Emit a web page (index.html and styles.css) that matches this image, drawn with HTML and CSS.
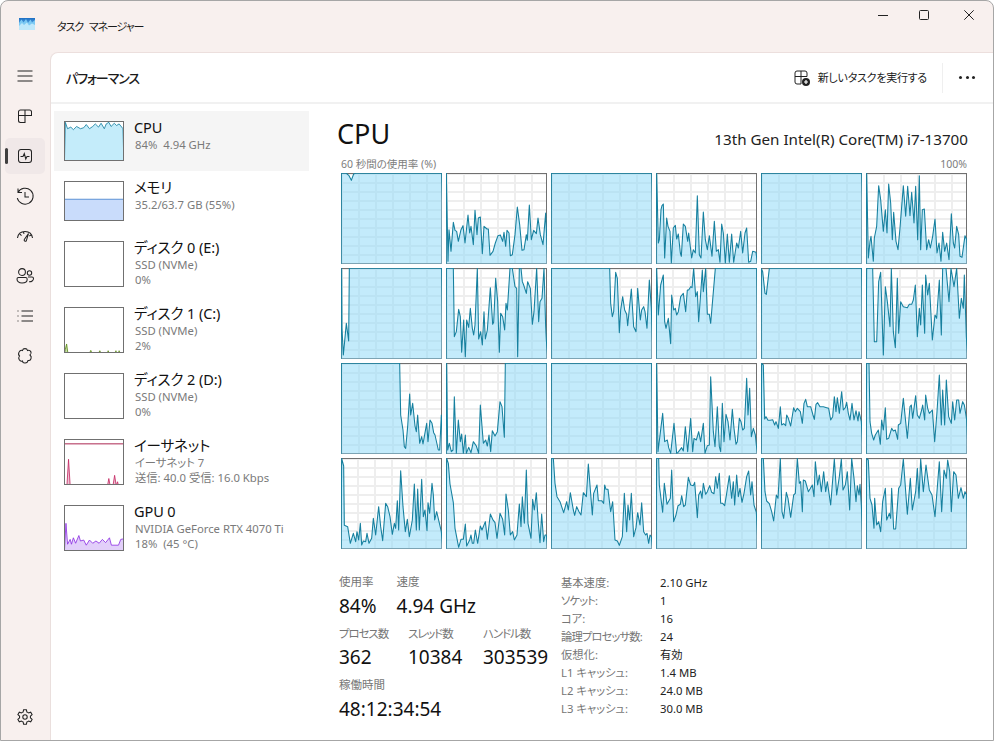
FILE: index.html
```html
<!DOCTYPE html>
<html lang="ja">
<head>
<meta charset="utf-8">
<title>タスク マネージャー</title>
<link rel="stylesheet" href="styles.css">
</head>
<body>
<div class="window">
  <header class="titlebar">
    <div class="brand">
      <svg class="app-icon" viewBox="0 0 16 12"><defs><linearGradient id="appg" x1="0" y1="0" x2="0" y2="1"><stop offset="0" stop-color="#1e6fc4"/><stop offset="1" stop-color="#8fd6f7"/></linearGradient></defs><rect width="16" height="12" fill="url(#appg)"/><path d="M0 5 L2.5 1.5 L4.5 4.5 L7 1 L9 5 L11.5 1.5 L13 4.5 L16 2 V12 H0Z" fill="#7cc9f3"/><path d="M0 8 L3 5 L5 7 L8 4.5 L10 7.5 L13 5.5 L16 7 V12 H0Z" fill="#bfe8fb"/></svg>
      <span class="app-title">タスク マネージャー</span>
    </div>
    <div class="controls">
      <svg class="ctl ctl-min" viewBox="0 0 10 10"><path d="M0 5.5H10"/></svg>
      <svg class="ctl ctl-max" viewBox="0 0 10 10"><rect x=".5" y=".5" width="9" height="9" rx="1"/></svg>
      <svg class="ctl ctl-close" viewBox="0 0 10 10"><path d="M.3 .3L9.7 9.7M9.7 .3L.3 9.7"/></svg>
    </div>
  </header>
  <div class="body">
    <nav class="nav">
      <div class="nav-top">
        <div class="nav-item"><svg class="ico" viewBox="0 0 20 20"><path d="M2.5 5H17.5M2.5 10H17.5M2.5 15H17.5"/></svg></div>
        <div class="nav-item"><svg class="ico" viewBox="0 0 20 20"><path d="M3.5 9.5H16.5V6a2 2 0 0 0-2-2H5.5a2 2 0 0 0-2 2V14.5a2 2 0 0 0 2 2H10V4"/></svg></div>
        <div class="nav-item active"><span class="indicator"></span><svg class="ico" viewBox="0 0 20 20"><rect x="3.5" y="3.5" width="13" height="13" rx="2.5"/><path d="M5.5 10.5H8L9.3 7.5L10.8 13L12 10.5H14.5"/></svg></div>
        <div class="nav-item"><svg class="ico" viewBox="0 0 20 20"><path d="M3 6.5A8 8 0 1 1 2.3 12M3 2.5V6.500H7M10 6V11H14"/></svg></div>
        <div class="nav-item"><svg class="ico" viewBox="0 0 20 20"><path d="M2.500 12C3 8 6 5.500 10 5.500S17 8 17.500 12M5 8.200l1.500 1.500M8.500 6l.5 1.800M16 9l-1.700 1M13.500 7.500L9.300 13.500a1.200 1.200 0 0 0 2 1.300Z"/></svg></div>
        <div class="nav-item"><svg class="ico" viewBox="0 0 20 20"><circle cx="7" cy="6" r="3.4"/><circle cx="14.5" cy="7" r="2.2"/><path d="M3.5 11.5H10.500a1.700 1.700 0 0 1 1.700 1.700C12.200 15.500 10 17 7 17S2 15.500 2 13a1.500 1.500 0 0 1 1.500-1.500ZM13 11H17a1.500 1.500 0 0 1 1.500 1.500C18.500 14.500 16.500 16 14 15.700"/></svg></div>
        <div class="nav-item"><svg class="ico" viewBox="0 0 20 20"><path d="M6.500 5H18M6.500 10H18M6.500 15H18M2.500 5H3.500M2.500 10H3.500M2.500 15H3.500"/></svg></div>
        <div class="nav-item"><svg class="ico" viewBox="0 0 20 20"><path d="M7.500 4.500C8 2 12 2 12.500 4.500C15.500 3.500 17.500 7 15 9C17.500 11 15.800 15 13 14.500C12.500 17.800 7.700 17.800 7.500 15C4.800 16 2.500 12.500 4.500 10C2.300 8 4.500 3.500 7.500 4.500Z"/></svg></div>
      </div>
      <div class="nav-item"><svg class="ico" viewBox="0 0 20 20"><circle cx="10" cy="10" r="2.200"/><path d="M8.600 2.800H11.400L11.900 5A5.500 5.500 0 0 1 13.500 5.900L15.700 5.200L17.100 7.600L15.400 9.100A5.500 5.500 0 0 1 15.400 10.900L17.100 12.400L15.700 14.800L13.500 14.100A5.500 5.500 0 0 1 11.900 15L11.400 17.200H8.600L8.100 15A5.500 5.500 0 0 1 6.500 14.100L4.300 14.800L2.900 12.400L4.600 10.900A5.500 5.500 0 0 1 4.600 9.100L2.900 7.600L4.300 5.200L6.500 5.900A5.500 5.500 0 0 1 8.100 5Z"/></svg></div>
    </nav>
    <main class="panel">
      <div class="toolbar">
        <h1 class="page-title">パフォーマンス</h1>
        <div class="tools">
          <div class="run-task">
            <svg class="run-icon" viewBox="0 0 16 16"><path class="run-lines" d="M1 6.500H13V3a2 2 0 0 0-2-2H3a2 2 0 0 0-2 2V12a2 2 0 0 0 2 2H7M7 1V14"/><circle cx="12" cy="12" r="4" class="run-dot"/><path class="run-plus" d="M12 10V14M10 12H14"/></svg>
            <span>新しいタスクを実行する</span>
          </div>
          <span class="more"><i></i><i></i><i></i></span>
        </div>
      </div>
      <div class="content">
        <aside class="list">
          <div class="row short selected">
            <svg class="thumb" viewBox="192 364 180 119" preserveAspectRatio="none"><polygon class="p-cpu" points="190,500 193,365 200,385 210,380 218,388 228,378 240,385 250,382 258,372 268,385 278,378 286,370 296,380 304,368 314,385 320,370 328,365 335,378 345,368 352,375 360,370 372,385 375,500"/></svg>
            <div class="row-text"><div class="name">CPU</div><div class="sub">84%&nbsp; 4.94 GHz</div></div>
          </div>
          <div class="row short">
            <svg class="thumb" viewBox="192 544 180 119" preserveAspectRatio="none"><polygon class="p-mem" points="190,598 375,598 375,670 190,670"/></svg>
            <div class="row-text"><div class="name">メモリ</div><div class="sub">35.2/63.7 GB (55%)</div></div>
          </div>
          <div class="row">
            <svg class="thumb" viewBox="0 0 180 137"></svg>
            <div class="row-text"><div class="name">ディスク 0 (E:)</div><div class="sub">SSD (NVMe)</div><div class="sub">0%</div></div>
          </div>
          <div class="row">
            <svg class="thumb" viewBox="192 171 180 137" preserveAspectRatio="none"><polygon class="p-disk" points="190,312 193,300 197,283 201,312 268,312 272,303 276,312 296,312 300,304 304,312 323,312 326,304 329,312 348,312 350,304 352,312 358,312 360,304 362,312 375,312"/></svg>
            <div class="row-text"><div class="name">ディスク 1 (C:)</div><div class="sub">SSD (NVMe)</div><div class="sub">2%</div></div>
          </div>
          <div class="row">
            <svg class="thumb" viewBox="0 0 180 137"></svg>
            <div class="row-text"><div class="name">ディスク 2 (D:)</div><div class="sub">SSD (NVMe)</div><div class="sub">0%</div></div>
          </div>
          <div class="row">
            <svg class="thumb" viewBox="192 568 180 137" preserveAspectRatio="none"><path class="p-net-limit" d="M190 580H375"/><polygon class="p-net" points="190,710 198,710 203,628 208,710 324,710 328,688 332,710 341,710 346,678 351,710 355,698 358,710 375,710"/></svg>
            <div class="row-text"><div class="name">イーサネット</div><div class="sub">イーサネット 7</div><div class="sub">送信: 40.0 受信: 16.0 Kbps</div></div>
          </div>
          <div class="row">
            <svg class="thumb" viewBox="192 766 180 137" preserveAspectRatio="none"><polygon class="p-gpu" points="190,910 195,820 200,885 208,870 212,885 218,865 225,882 235,858 240,875 250,872 258,888 268,872 278,882 288,875 298,882 308,870 318,880 330,865 336,888 358,888 365,870 375,868 375,910"/></svg>
            <div class="row-text"><div class="name">GPU 0</div><div class="sub">NVIDIA GeForce RTX 4070 Ti</div><div class="sub">18%&nbsp; (45 °C)</div></div>
          </div>
        </aside>
        <section class="detail">
          <div class="detail-head"><h2 class="cpu-title">CPU</h2><div class="cpu-model">13th Gen Intel(R) Core(TM) i7-13700</div></div>
          <div class="axis"><span>60 秒間の使用率 (%)</span><span>100%</span></div>
          <div class="charts">
            <div class="chart"><svg viewBox="34 190 303 273" preserveAspectRatio="none"><polygon points="34,480 35,191 50,191 58,198 65,212 72,193 78,191 336,191 345,480"/></svg></div>
            <div class="chart"><svg viewBox="349 190 303 273" preserveAspectRatio="none"><polygon points="349,480 350,190 355,455 358,360 364,425 371,338 376,362 381,365 386,395 394,360 400,348 406,400 415,316 420,370 424,350 431,405 436,302 442,375 446,325 452,322 458,432 463,350 472,358 476,358 481,437 490,425 497,400 505,378 512,376 519,395 523,368 528,410 532,362 538,370 542,438 548,435 556,375 563,292 570,345 577,422 583,420 590,375 593,392 599,286 605,390 612,362 620,372 625,325 632,375 640,405 648,310 655,480"/></svg></div>
            <div class="chart"><svg viewBox="664 190 303 273" preserveAspectRatio="none"><polygon points="664,480 665,191 966,191 975,480"/></svg></div>
            <div class="chart"><svg viewBox="18 190 303 273" preserveAspectRatio="none"><polygon points="18,480 20,190 25,400 28,390 33,300 36,288 40,283 44,445 50,325 54,350 60,365 64,460 70,355 76,347 80,388 85,373 91,430 94,440 100,343 106,350 113,395 116,370 125,445 130,420 136,430 142,258 148,435 153,445 160,307 166,390 172,420 178,378 186,440 193,335 199,425 205,420 210,458 215,343 220,370 226,460 232,373 238,458 245,373 251,458 260,400 265,415 272,365 278,430 285,370 290,355 296,458 302,455 308,425 318,428 325,480"/></svg></div>
            <div class="chart"><svg viewBox="333 190 303 273" preserveAspectRatio="none"><polygon points="333,480 334,191 635,191 645,480"/></svg></div>
            <div class="chart"><svg viewBox="648 190 303 273" preserveAspectRatio="none"><polygon points="648,480 650,190 655,445 660,395 663,380 670,455 673,385 680,350 686,228 692,270 700,365 706,300 711,370 716,223 722,280 727,390 731,308 738,395 744,420 750,355 760,228 767,320 773,230 780,318 785,248 792,340 797,230 803,390 808,198 812,420 817,300 823,298 830,420 836,390 841,415 848,380 855,328 861,430 867,400 873,455 878,368 884,425 890,400 897,450 904,312 910,400 914,415 920,350 926,375 930,440 936,443 945,378 950,390 955,480"/></svg></div>

            <div class="chart"><svg viewBox="18 9 303 273" preserveAspectRatio="none"><polygon points="18,300 20,10 21,190 25,270 34,175 41,228 43,10 320,10 325,300"/></svg></div>
            <div class="chart"><svg viewBox="333 9 303 273" preserveAspectRatio="none"><polygon points="333,300 334,10 355,10 358,215 364,200 371,133 376,155 380,262 386,165 391,275 395,165 401,187 406,130 412,190 416,210 420,180 427,10 431,222 437,200 442,240 447,140 451,222 457,195 466,68 473,178 476,172 482,40 488,110 493,262 497,145 503,155 509,195 513,115 517,135 525,10 532,10 540,65 545,70 548,275 553,10 558,10 562,50 566,60 574,85 578,50 586,70 592,178 597,140 605,10 611,170 615,110 621,100 627,10 632,185 634,225 640,300"/></svg></div>
            <div class="chart"><svg viewBox="648 9 303 273" preserveAspectRatio="none"><polygon points="648,300 649,10 824,10 827,115 832,155 836,140 842,22 847,40 853,203 857,135 863,95 869,135 875,148 878,182 889,72 896,185 903,200 908,70 916,165 920,135 926,125 930,140 936,190 943,45 949,130 955,300"/></svg></div>
            <div class="chart alt"><svg viewBox="18 9 303 273" preserveAspectRatio="none"><polygon points="18,300 20,10 25,150 32,60 40,30 44,170 48,190 55,160 62,236 65,90 71,135 76,130 80,150 85,140 92,95 100,85 107,140 112,75 116,75 122,65 126,68 131,10 137,95 142,80 146,170 157,15 160,80 167,10 172,148 178,148 182,175 196,10 320,10 325,300"/></svg></div>
            <div class="chart"><svg viewBox="333 9 303 273" preserveAspectRatio="none"><polygon points="333,300 334,10 338,20 345,85 349,88 358,10 635,10 640,300"/></svg></div>
            <div class="chart alt"><svg viewBox="648 9 303 273" preserveAspectRatio="none"><polygon points="648,300 650,10 668,10 673,230 680,230 686,50 692,22 700,270 706,65 712,110 720,185 724,10 730,200 736,248 742,40 746,205 752,110 760,125 772,128 778,118 785,118 790,105 796,60 802,215 808,130 812,180 817,60 824,205 827,30 833,90 838,55 847,225 855,150 860,160 868,45 874,210 878,10 888,10 897,110 903,10 912,65 920,10 928,160 934,100 940,130 943,30 949,215 955,300"/></svg></div>

            <div class="chart"><svg viewBox="18 9 303 273" preserveAspectRatio="none"><polygon points="18,300 19,10 194,10 197,165 204,210 208,260 212,265 218,200 224,102 227,165 233,130 240,198 244,215 248,165 254,250 260,230 264,252 275,190 279,245 285,180 291,190 296,218 300,225 310,270 314,270 319,165 325,300"/></svg></div>
            <div class="chart"><svg viewBox="333 9 303 273" preserveAspectRatio="none"><polygon points="333,300 335,10 338,270 343,250 349,275 354,270 358,110 364,280 370,180 376,245 380,222 385,280 391,225 394,280 401,262 408,278 415,245 424,258 431,280 436,135 445,250 452,240 457,258 462,225 467,275 472,212 480,228 487,215 495,125 501,140 508,232 511,10 636,10 640,300"/></svg></div>
            <div class="chart"><svg viewBox="648 9 303 273" preserveAspectRatio="none"><polygon points="648,300 649,10 950,10 955,300"/></svg></div>
            <div class="chart"><svg viewBox="18 294 303 273" preserveAspectRatio="none"><polygon points="18,580 20,295 24,560 38,445 44,530 52,525 56,548 62,565 72,475 80,565 84,562 95,548 100,558 106,485 113,560 122,460 128,560 132,520 139,525 146,500 152,530 160,475 165,565 172,542 178,540 182,335 190,500 195,545 202,425 208,545 212,560 217,415 222,530 228,448 234,470 240,525 247,433 252,490 258,538 262,530 268,460 273,470 278,495 283,490 290,340 294,450 299,370 304,515 310,490 316,510 319,540 325,580"/></svg></div>
            <div class="chart alt"><svg viewBox="333 294 303 273" preserveAspectRatio="none"><polygon points="333,580 335,295 340,300 344,462 348,455 354,466 360,466 368,464 374,480 378,470 385,490 391,425 395,480 401,476 407,482 410,450 415,460 422,483 431,428 436,440 442,430 451,440 457,475 462,415 467,403 472,425 482,425 489,450 493,463 498,418 503,413 510,425 520,425 530,428 536,430 542,465 548,455 553,395 558,440 562,398 568,445 575,380 580,435 586,428 590,412 595,445 600,465 606,415 612,465 618,437 624,468 627,440 634,470 640,580"/></svg></div>
            <div class="chart alt"><svg viewBox="648 294 303 273" preserveAspectRatio="none"><polygon points="648,580 650,295 657,295 660,470 665,505 671,525 676,510 685,495 691,538 695,465 700,495 706,428 710,523 716,520 725,490 730,498 736,495 743,523 745,480 752,475 760,400 772,520 780,425 784,420 788,460 797,392 802,450 808,460 815,435 818,420 824,465 827,390 833,430 838,445 847,435 854,530 861,440 868,330 874,480 878,375 884,480 889,345 896,455 904,475 908,410 914,465 920,405 926,405 930,445 938,410 943,420 950,465 955,580"/></svg></div>

            <div class="chart alt"><svg viewBox="18 294 303 273" preserveAspectRatio="none"><polygon points="18,580 20,295 26,318 28,496 38,500 46,550 55,520 62,545 66,515 71,540 76,490 80,555 85,543 92,545 96,520 102,550 110,535 115,475 122,525 131,440 137,500 143,542 152,430 158,440 165,470 172,523 178,490 182,505 187,422 191,510 197,332 204,440 211,515 217,478 223,530 232,480 238,372 244,510 248,387 253,510 260,358 265,470 270,450 276,512 279,428 284,460 291,370 295,405 299,480 305,455 319,515 325,580"/></svg></div>
            <div class="chart alt"><svg viewBox="333 294 303 273" preserveAspectRatio="none"><polygon points="333,580 335,295 340,310 345,372 355,428 360,505 371,562 378,538 385,538 391,492 395,558 404,540 408,525 412,550 416,550 421,510 428,550 436,498 441,510 451,485 457,538 466,462 473,478 480,488 486,535 495,460 503,478 509,525 513,402 520,450 526,525 533,515 538,540 546,525 553,432 558,500 562,410 568,490 574,330 579,490 588,535 593,418 598,450 604,398 610,490 615,548 620,462 626,545 630,525 634,525 640,580"/></svg></div>
            <div class="chart alt"><svg viewBox="648 294 303 273" preserveAspectRatio="none"><polygon points="648,580 650,295 655,295 660,370 666,410 675,425 686,458 695,425 700,450 706,398 715,450 719,466 725,440 732,455 738,465 745,398 754,410 760,312 772,465 776,400 786,375 790,422 800,422 806,430 809,375 813,388 819,388 827,455 833,425 840,540 847,543 853,556 862,530 868,400 875,515 879,435 884,480 889,400 896,530 903,503 908,458 915,495 920,428 926,515 932,525 936,520 941,550 945,525 949,530 955,580"/></svg></div>
            <div class="chart"><svg viewBox="18 579 303 273" preserveAspectRatio="none"><polygon points="18,860 20,580 26,580 28,660 38,742 43,655 51,718 61,700 65,615 71,770 78,750 84,722 91,718 95,692 101,725 106,720 115,637 122,660 130,662 134,652 142,758 146,690 152,678 156,700 160,655 167,688 172,680 179,662 185,682 192,686 197,635 202,670 208,625 212,715 218,715 224,722 230,685 238,632 245,700 250,650 254,720 260,630 265,695 270,670 276,712 282,685 290,635 296,618 302,690 306,650 312,720 319,742 325,860"/></svg></div>
            <div class="chart alt"><svg viewBox="333 579 303 273" preserveAspectRatio="none"><polygon points="333,860 335,580 340,580 345,680 350,708 358,716 365,740 371,768 379,690 384,700 391,580 396,740 401,760 409,682 414,700 422,757 431,690 436,685 442,580 448,655 452,650 457,740 460,645 466,648 475,680 480,672 487,660 492,695 496,590 503,660 508,630 514,680 521,620 527,680 532,650 542,720 553,582 560,690 568,635 574,582 579,675 586,660 592,620 599,735 605,580 612,640 618,710 622,662 627,690 630,658 634,720 640,860"/></svg></div>
            <div class="chart alt"><svg viewBox="648 579 303 273" preserveAspectRatio="none"><polygon points="648,860 650,580 655,585 660,700 666,720 672,790 674,700 680,780 686,770 692,800 698,710 706,670 710,765 718,745 722,760 725,670 731,792 737,792 746,670 752,660 760,582 772,748 781,640 787,735 797,680 802,610 807,700 812,582 820,680 828,600 838,675 846,690 855,755 868,590 875,740 882,615 889,640 893,585 899,620 904,740 911,620 918,630 925,700 933,668 940,700 945,680 950,690 955,860"/></svg></div>
          </div>
          <div class="stats">
            <div class="stats-left">
              <div class="stat-row row-a">
                <div class="stat"><div class="label">使用率</div><div class="value">84%</div></div>
                <div class="stat"><div class="label">速度</div><div class="value">4.94 GHz</div></div>
              </div>
              <div class="stat-row row-b">
                <div class="stat"><div class="label tight">プロセス数</div><div class="value">362</div></div>
                <div class="stat"><div class="label tight">スレッド数</div><div class="value">10384</div></div>
                <div class="stat"><div class="label tight">ハンドル数</div><div class="value">303539</div></div>
              </div>
              <div class="stat row-c"><div class="label">稼働時間</div><div class="value">48:12:34:54</div></div>
            </div>
            <dl class="specs">
              <dt>基本速度:</dt><dd>2.10 GHz</dd>
              <dt class="tight">ソケット:</dt><dd>1</dd>
              <dt>コア:</dt><dd>16</dd>
              <dt class="tight">論理プロセッサ数:</dt><dd>24</dd>
              <dt>仮想化:</dt><dd>有効</dd>
              <dt>L1 キャッシュ:</dt><dd>1.4 MB</dd>
              <dt>L2 キャッシュ:</dt><dd>24.0 MB</dd>
              <dt>L3 キャッシュ:</dt><dd>30.0 MB</dd>
            </dl>
          </div>
        </section>
      </div>
    </main>
  </div>
</div>
</body>
</html>
```
FILE: styles.css
```css
* { box-sizing: border-box; }
html, body { margin: 0; padding: 0; background: #fff; }
body {
  width: 994px; height: 741px; overflow: hidden;
  font-family: "Noto Sans", "Noto Sans CJK JP", sans-serif;
  font-feature-settings: "palt";
  color: #1a1a1a;
}
.window {
  width: 994px; height: 741px;
  display: flex; flex-direction: column;
  background: #f8f0ee;
  border: 1px solid #a6a6a6;
  border-radius: 8px 8px 0 0;
  overflow: hidden;
}
.titlebar { height: 51px; flex: none; display: flex; justify-content: space-between; align-items: flex-start; }
.brand { display: flex; align-items: flex-start; padding: 17px 0 0 18px; }
.app-icon { width: 16px; height: 12px; display: block; }
.app-title { margin-left: 22px; font-size: 11px; letter-spacing: -1.1px; word-spacing: 4px; line-height: 18px; }
.controls { display: flex; padding: 9px 19px 0 0; gap: 31px; align-items: center; }
.ctl { width: 10px; height: 10px; fill: none; stroke: #222; stroke-width: 1; display: block; overflow: visible; }
.ctl-max { margin-right: 4px; }
.body { flex: 1; display: flex; min-height: 0; }
.nav { width: 49px; flex: none; display: flex; flex-direction: column; justify-content: space-between; padding: 6px 0 5px 4px; }
.nav-top { display: flex; flex-direction: column; gap: 4px; }
.nav-item { width: 40px; height: 36px; display: flex; align-items: center; justify-content: center; position: relative; border-radius: 5px; }
.nav-item.active { background: #f0e8e8; }
.indicator { position: absolute; left: 0; top: 10px; width: 3px; height: 16px; border-radius: 2px; background: #404040; }
.ico { width: 20px; height: 20px; fill: none; stroke: #222; stroke-width: 1.05; display: block; }
.panel { flex: 1; min-width: 0; background: #fff; border-top: 1px solid #ecdfdd; border-left: 1px solid #eadfdd; border-top-left-radius: 8px; display: flex; flex-direction: column; }
.toolbar { height: 51px; flex: none; display: flex; align-items: center; justify-content: space-between; border-bottom: 2px solid #f1f1f1; padding: 0 18px 0 15px; }
.page-title { margin: 0; font-size: 13px; letter-spacing: -1.1px; font-weight: 500; line-height: 20px; }
.tools { display: flex; align-items: center; }
.run-task { display: flex; align-items: center; gap: 8px; font-size: 11px; letter-spacing: -.25px; line-height: 30px; padding-right: 15px; border-right: 1px solid #efefef; color: #222; }
.run-icon { width: 16px; height: 16px; display: block; }
.run-lines { fill: none; stroke: #222; stroke-width: 1; }
.run-dot { fill: #222; }
.run-plus { stroke: #fff; stroke-width: 1.2; fill: none; }
.more { display: flex; gap: 3.5px; margin-left: 16px; }
.more i { width: 3px; height: 3px; background: #222; border-radius: 50%; display: block; }
.content { flex: 1; display: flex; min-height: 0; }
.list { width: 259px; flex: none; padding: 7px 1px 0 3px; display: flex; flex-direction: column; }
.row { display: flex; height: 66px; padding: 10px 0 0 10px; gap: 10px; }
.row.short { height: 60px; }
.row.selected { background: #f5f5f5; }
.thumb { width: 60px; height: 46px; border: 1px solid #707070; background: #fff; flex: none; display: block; }
.short .thumb { height: 40px; }
.row-text { min-width: 0; margin-top: -3px; }
.name { font-size: 14.500px; letter-spacing: -.1px; line-height: 19px; color: #111; }
.sub { font-size: 11.300px; line-height: 15px; color: #7a7a7a; white-space: nowrap; margin-left: 1px; }
.p-cpu { fill: #c4ecfa; stroke: #0e7a9c; stroke-width: 2.5; }
.p-mem { fill: #c9dcfb; stroke: #1560c0; stroke-width: 2; }
.p-disk { fill: #c5dca8; stroke: #5a8a10; stroke-width: 2.5; }
.p-net { fill: #edc3d2; stroke: #c3225f; stroke-width: 2.5; }
.p-net-limit { stroke: #a81f4c; stroke-width: 3; fill: none; }
.p-gpu { fill: #e2cffa; stroke: #8a2be2; stroke-width: 2.5; }
.detail { flex: 1; min-width: 0; padding: 0 0 0 27px; }
.detail-head { display: flex; justify-content: space-between; align-items: flex-end; height: 53px; padding-right: 25px; }
.cpu-title { margin: 0 0 3px; font-size: 27px; font-weight: 400; line-height: 40px; color: #111; }
.cpu-model { font-size: 15.200px; line-height: 20px; margin-bottom: 8px; color: #222; }
.axis { display: flex; justify-content: space-between; font-size: 10.500px; line-height: 15px; color: #7d7d7d; margin: 0 26px 1px 4px; }
.charts { display: grid; grid-template-columns: repeat(6, 101px); grid-auto-rows: 91px; gap: 4px; margin-left: 4px; }
.chart {
  border: 1px solid #707070;
  background-color: #fff;
  background-image:
    linear-gradient(#eeeeee 2px, transparent 2px),
    linear-gradient(90deg, #eeeeee 2px, transparent 2px);
  background-size: 17px 9px;
  background-position: 16px 8px;
}
.chart.alt { background-position: 15px 8px; }
.chart svg { display: block; width: 101px; height: 91px; margin: -1px; }
.chart polygon { fill: rgba(135, 215, 247, .5); stroke: #16809f; stroke-width: 3.200; stroke-linejoin: round; }
.stats { display: flex; padding: 25px 0 0 2px; }
.stats-left { width: 222px; flex: none; }
.stat-row { display: flex; }
.row-a { gap: 20px; margin-bottom: 5px; }
.row-a .value, .row-c .value { margin-top: 1px; }
.row-b { margin-bottom: 5px; }
.row-b .stat:nth-child(1) { width: 69px; }
.row-b .stat:nth-child(2) { width: 75px; }
.stat { white-space: nowrap; }
.label { font-size: 11.500px; line-height: 16px; color: #767676; }
.label.tight { letter-spacing: -1.1px; }
.value { font-size: 19px; line-height: 30px; color: #111; }
.specs { margin: 0; display: grid; grid-template-columns: 99px auto; grid-auto-rows: 18px; font-size: 11.300px; line-height: 18px; align-content: start; }
.specs dt { color: #767676; white-space: nowrap; }
.specs dt.tight { letter-spacing: -.85px; }
.specs dd { margin: 0; color: #222; }
```
